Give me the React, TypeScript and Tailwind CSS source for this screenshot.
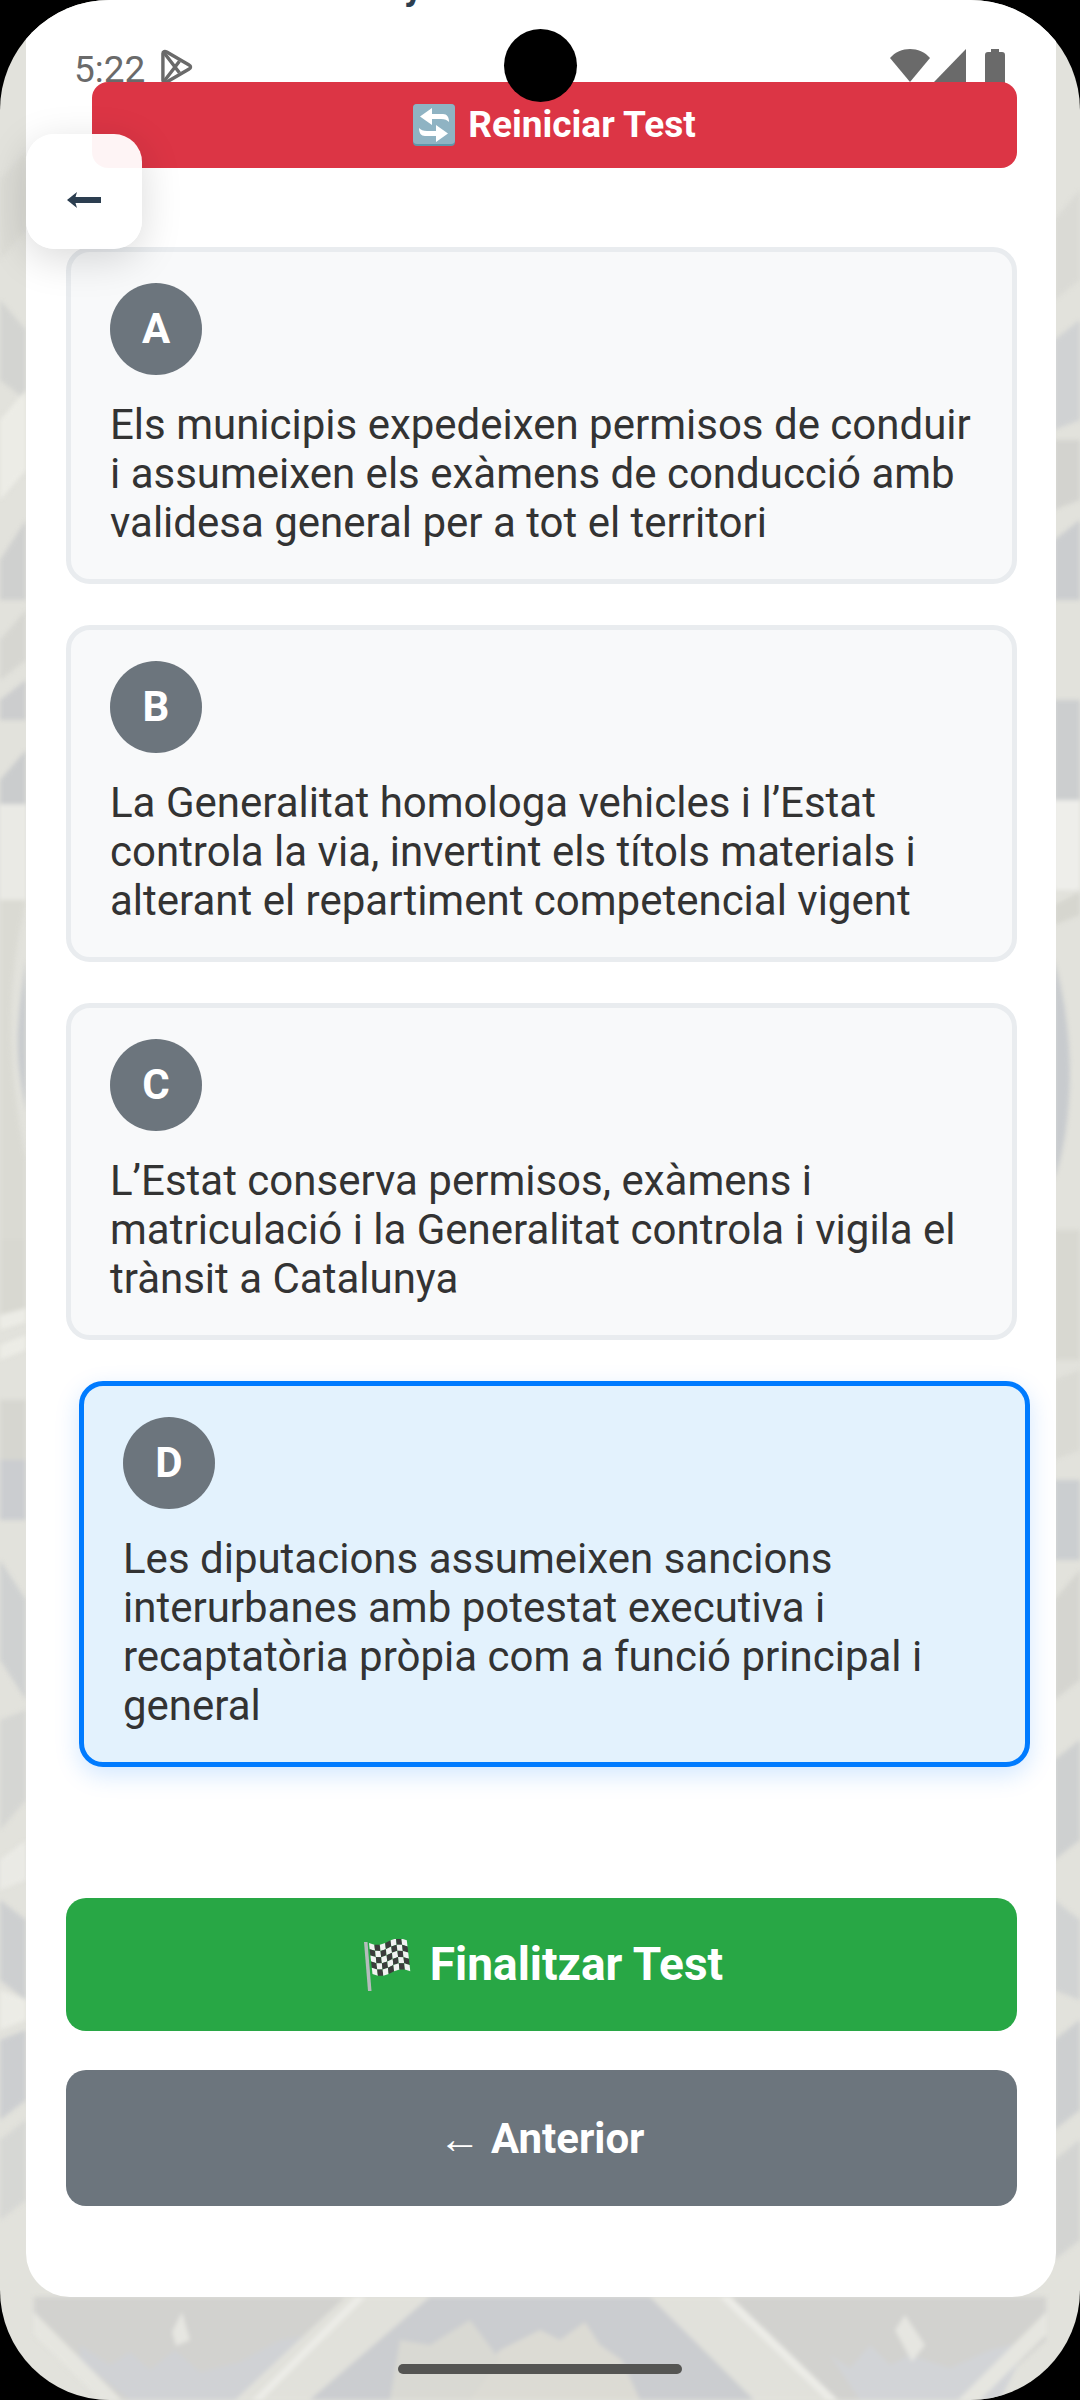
const options = [
  {
    letter: 'A',
    lines: ['Els municipis expedeixen permisos de conduir', 'i assumeixen els exàmens de conducció amb', 'validesa general per a tot el territori'],
  },
  {
    letter: 'B',
    lines: ['La Generalitat homologa vehicles i l’Estat', 'controla la via, invertint els títols materials i', 'alterant el repartiment competencial vigent'],
  },
  {
    letter: 'C',
    lines: ['L’Estat conserva permisos, exàmens i', 'matriculació i la Generalitat controla i vigila el', 'trànsit a Catalunya'],
  },
  {
    letter: 'D',
    selected: true,
    lines: ['Les diputacions assumeixen sancions', 'interurbanes amb potestat executiva i', 'recaptatòria pròpia com a funció principal i', 'general'],
  },
]

// washed out aerial photo behind the panel, only the edges show
function Backdrop() {
  return (
    <svg className="absolute inset-0" width="1080" height="2400" viewBox="0 0 1080 2400">
      <rect width="1080" height="2400" fill="#e2e2dc" />
      <g className="blur-[2px]">
        {/* left strip */}
        <path d="M0 180L26 150V230L0 260Z" fill="#dcdcd6" />
        <path d="M0 300L26 330V400L0 380Z" fill="#d3d4d1" />
        <path d="M0 420L26 390V470L0 500Z" fill="#ecece6" />
        <path d="M0 560L26 520V600H0Z" fill="#cfd0cf" />
        <path d="M0 640L26 610V660L0 680Z" fill="#d6d6d1" />
        <path d="M0 700L26 680V720H0Z" fill="#cccdce" />
        <path d="M0 780L26 750V804H0Z" fill="#cacccd" />
        <rect y="804" width="26" height="100" fill="#eaeae5" />
        <path d="M26 900C8 980 4 1050 26 1160V1240H0V900Z" fill="#dadad3" />
        <path d="M26 960C14 1040 16 1060 26 1110Z" fill="#c8cbce" />
        <rect y="1240" width="26" height="80" fill="#d8d8d1" />
        <path d="M0 1315L26 1308V1322L0 1330ZM0 1345L26 1335V1350L0 1360Z" fill="#ecece6" />
        <rect y="1400" width="26" height="110" fill="#d6d6d0" />
        <rect y="1460" width="26" height="60" fill="#cbcdd0" />
        <path d="M0 1560L26 1600V1700L0 1660Z" fill="#cfd1d1" />
        <path d="M0 1720L26 1710V1800L0 1830Z" fill="#d5d6d3" />
        <path d="M0 1860L26 1840V1880L0 1890Z" fill="#eaeae5" />
        <path d="M0 1900L26 1920V2000L0 1980Z" fill="#cdcfd0" />
        <path d="M0 1990L26 2000V2020L0 2030Z" fill="#ecece6" />
        <path d="M0 2040L26 2030V2100L0 2120Z" fill="#ccced0" />
        <path d="M0 2140L26 2120V2200L0 2220Z" fill="#d6d7d4" />
        {/* right strip */}
        <path d="M1054 220L1080 190V280L1054 300Z" fill="#dadad5" />
        <path d="M1054 340L1080 320V420L1054 430Z" fill="#d0d2d3" />
        <path d="M1054 440H1080V500L1054 510Z" fill="#d3d3cf" />
        <path d="M1054 540L1080 520V600H1054Z" fill="#cbcdcf" />
        <path d="M1054 700H1080V800H1054Z" fill="#cccecf" />
        <rect x="1054" y="800" width="26" height="90" fill="#eeeeea" />
        <path d="M1054 905L1080 892V915L1054 925Z" fill="#d6d6cf" />
        <path d="M1054 960C1075 1030 1075 1120 1054 1180Z" fill="#c8cbce" />
        <rect x="1054" y="1230" width="26" height="130" fill="#d8d8d1" />
        <path d="M1054 1380L1080 1370V1450L1054 1460Z" fill="#dadad4" />
        <rect x="1054" y="1480" width="26" height="80" fill="#cbced0" />
        <path d="M1054 1600L1080 1570V1680L1054 1700Z" fill="#d5d5d0" />
        <path d="M1054 1760L1080 1740V1840L1054 1860Z" fill="#ced0d0" />
        <path d="M1054 1900L1080 1920V2000L1054 1990Z" fill="#d1d3d3" />
        <path d="M1054 2040L1080 2020V2110L1054 2130Z" fill="#cdcfd0" />
        <path d="M1054 2160L1080 2140V2240L1054 2260Z" fill="#d3d4d2" />
        {/* below the panel */}
        <path d="M34 2297H1046V2340L980 2400H100L34 2335Z" fill="#d2d2cf" />
        <path d="M80 2345L110 2365L130 2352L150 2370L175 2350L200 2372L240 2362L280 2340L400 2320L300 2400H130L80 2360Z" fill="#d0d2d5" />
        <path d="M345 2297H430L310 2400H235Z" fill="#e1e1db" />
        <path d="M355 2297H366L262 2400H252Z" fill="#ecece7" />
        <path d="M430 2297H650L754 2400H310Z" fill="#cbcdd0" />
        <path d="M650 2297H719L826 2400H754Z" fill="#e1e1db" />
        <path d="M719 2297H731L838 2400H826Z" fill="#ecece7" />
        <path d="M540 2330L560 2340L585 2322L600 2345L622 2360L640 2400H450L470 2385L500 2350Z" fill="#dcdbd4" />
        <path d="M400 2340L430 2345L470 2320L500 2360L470 2400H390Z" fill="#d9d9d3" />
        <path d="M830 2355L850 2368L870 2345L890 2365L910 2355L950 2368L990 2350L1030 2340L1000 2400H860Z" fill="#d2d4d7" />
        <path d="M895 2330L905 2315L925 2345L912 2362ZM172 2332L182 2312L190 2340L176 2346Z" fill="#e6e6e1" />
        <path d="M34 2335L100 2400H122L34 2312Z" fill="#e6e6e0" />
        <path d="M1046 2335L980 2400H958L1046 2312Z" fill="#e6e6e0" />
      </g>
    </svg>
  )
}

function RepeatEmoji() {
  return (
    <svg width="42" height="42" viewBox="0 0 42 42" className="shrink-0">
      <rect width="42" height="42" rx="4" fill="#5f97ab" />
      <rect width="42" height="40" rx="4" fill="#8fb3c3" />
      <path d="M19 4V10H30C34 10 36 13 36 18C34 16 32 15 28 15H19V21L7 12.5Z" fill="#fff" />
      <path d="M23 38V32H12C8 32 6 29 6 24C8 26 10 27 14 27H23V21L35 29.5Z" fill="#fff" />
    </svg>
  )
}

// checker cells bent along a wave, same as the flag emoji
function FlagEmoji() {
  const cols = 7
  const rows = 5
  const pt = (c: number, r: number) => {
    const x = 5 + c * 5.4 + r * 0.7
    const y = 4 + r * 6.2 + Math.sin((c / cols) * 6.28) * 2.6 - c * 0.4
    return `${x},${y}`
  }
  const cells = []
  for (let c = 0; c < cols; c++) {
    for (let r = 0; r < rows; r++) {
      cells.push(
        <polygon
          key={`${c}-${r}`}
          points={`${pt(c, r)} ${pt(c + 1, r)} ${pt(c + 1, r + 1)} ${pt(c, r + 1)}`}
          fill={(c + r) % 2 === 0 ? '#f2f2f2' : '#3c3c3c'}
        />,
      )
    }
  }
  return (
    <svg width="48" height="52" viewBox="0 0 48 52" className="shrink-0">
      <path d="M0 3H3.5L7.5 52H4Z" fill="#b5bcbc" />
      {cells}
    </svg>
  )
}

function StatusBar() {
  return (
    <div className="absolute top-[49px] left-[48px] right-[51px] flex items-start justify-between text-[#6a6a6a]">
      <div className="flex items-start gap-[15px]">
        <span className="text-[37px] leading-[42px]">5:22</span>
        <svg width="33" height="36" viewBox="0 0 34 36" fill="none" stroke="#6a6a6a" strokeWidth="3.5" strokeLinejoin="round">
          <path d="M3 4C3 2 5 1.5 7 2.5L30 16C32 17 32 19 30 20L7 33.5C5 34.5 3 34 3 32Z" />
          <path d="M4 3L20 24M4 33L20 12" />
        </svg>
      </div>
      <div className="flex items-start">
        <svg width="40" height="33" viewBox="0 0 40 33" fill="#6a6a6a">
          <path d="M0 9C10 -3 30 -3 40 9L20 33Z" />
        </svg>
        <svg width="32" height="33" viewBox="0 0 32 33" fill="#6a6a6a" className="ml-[4px]">
          <path d="M32 0V33H0Z" />
        </svg>
        <svg width="20" height="34" viewBox="0 0 20 34" fill="#6a6a6a" className="ml-[19px]">
          <path d="M6 0H14V3H17C19 3 20 4 20 6V34H0V6C0 4 1 3 3 3H6Z" />
        </svg>
      </div>
    </div>
  )
}

function OptionCard({ letter, lines, selected }: { letter: string; lines: string[]; selected?: boolean }) {
  return (
    <div
      className={
        selected
          ? 'translate-x-[13px] rounded-[24px] border-[5px] border-[#007bff] bg-[#e3f2fd] px-[39px] pt-[31px] pb-[32px] shadow-[0_8px_24px_rgba(0,123,255,0.18)]'
          : 'rounded-[24px] border-[5px] border-[#e9ecef] bg-[#f8f9fa] px-[39px] pt-[31px] pb-[32px]'
      }
    >
      <div className="flex h-[92px] w-[92px] items-center justify-center rounded-full bg-[#6c757d] pb-[2px] text-[42px] font-bold text-white">
        {letter}
      </div>
      <p className="mt-[25px] text-[42px] leading-[49px] text-[#333333]">
        {lines.map((line) => (
          <span key={line} className="block whitespace-nowrap">
            {line}
          </span>
        ))}
      </p>
    </div>
  )
}

export default function App() {
  return (
    <div className="relative h-[2400px] w-[1080px] overflow-hidden bg-black font-[Roboto,sans-serif]">
      <div className="relative h-full w-full overflow-hidden rounded-[110px]">
        <Backdrop />

        <div className="relative ml-[26px] mr-[24px] flex h-[2297px] flex-col rounded-b-[44px] bg-white pl-[40px] pr-[39px] pt-[82px]">
          <StatusBar />

          {/* what is left of the scrolled question title */}
          <span className="absolute left-[378px] top-[-36px] text-[38px] leading-[44px] font-bold text-[#2c3e50]">y</span>

          <button className="relative ml-[26px] flex h-[86px] items-center justify-center gap-[13px] rounded-[16px] bg-[#dc3545] text-[37px] font-bold text-white">
            <RepeatEmoji />
            Reiniciar Test
          </button>

          <div className="mt-[79px] flex flex-col gap-[41px]">
            {options.map((o) => (
              <OptionCard key={o.letter} {...o} />
            ))}
          </div>

          <button className="mt-[131px] flex h-[133px] items-center justify-center gap-[18px] rounded-[20px] bg-[#28a745] pl-[4px] text-[46px] font-bold text-white">
            <FlagEmoji />
            Finalitzar Test
          </button>
          <button className="mt-[39px] flex h-[136px] items-center justify-center rounded-[20px] bg-[#6c757d] text-[42px] font-bold text-white">
            ← Anterior
          </button>

          {/* back button floats over the list */}
          <button className="absolute left-0 top-[134px] flex h-[115px] w-[116px] items-center justify-center rounded-[28px] bg-white/95 pt-[16px] shadow-[0_10px_40px_rgba(0,0,0,0.15)]">
            <svg width="34" height="16" viewBox="0 0 34 16" fill="#2c3e50">
              <path d="M0 8L10 0L8.5 5H34V11H8.5L10 16Z" />
            </svg>
          </button>
        </div>

        {/* camera cutout */}
        <div className="absolute left-[504px] top-[29px] h-[73px] w-[73px] rounded-full bg-black" />

        {/* gesture bar */}
        <div className="absolute bottom-[26px] left-[398px] h-[10px] w-[284px] rounded-full bg-[#555553]" />
      </div>
    </div>
  )
}
